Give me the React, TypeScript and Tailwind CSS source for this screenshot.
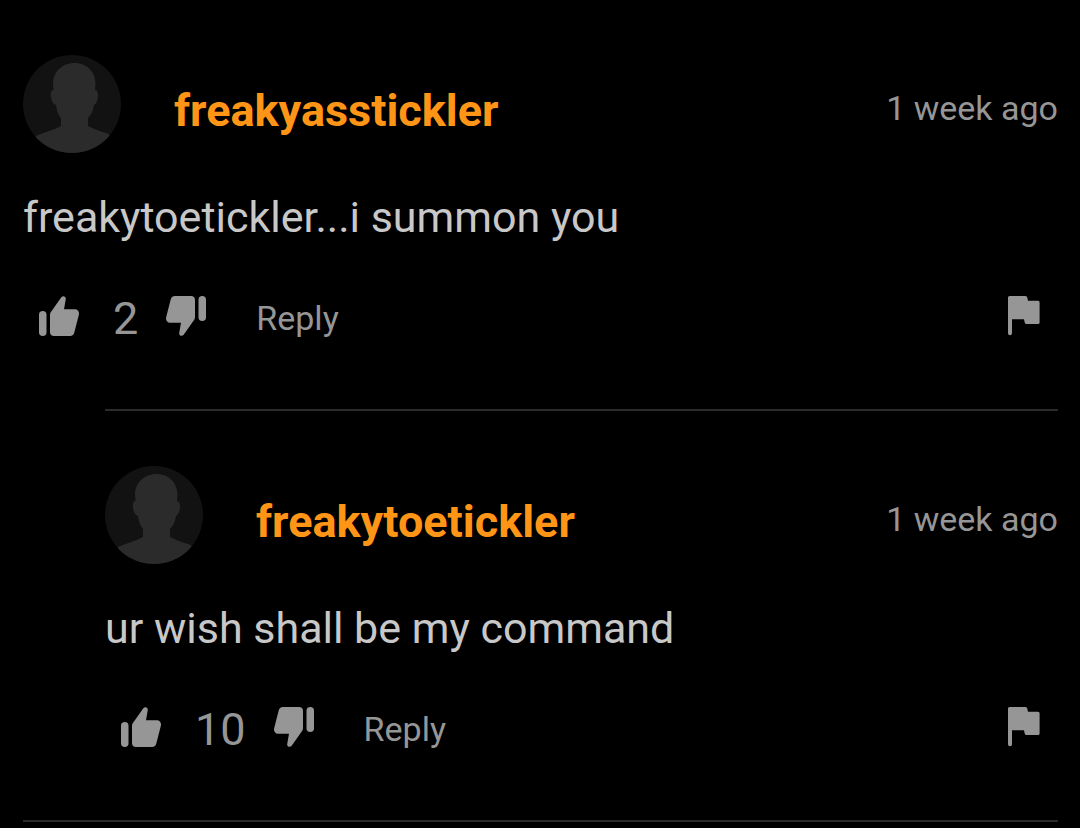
import React from 'react';
import clsx from 'clsx';

interface Comment {
  id: number;
  author: string;
  postedAt: string;
  text: string;
  votes: number;
  isReply: boolean;
}

const comments: Comment[] = [
  {
    id: 1,
    author: 'freakyasstickler',
    postedAt: '1 week ago',
    text: 'freakytoetickler...i summon you',
    votes: 2,
    isReply: false,
  },
  {
    id: 2,
    author: 'freakytoetickler',
    postedAt: '1 week ago',
    text: 'ur wish shall be my command',
    votes: 10,
    isReply: true,
  },
];

const Avatar: React.FC = () => (
  <svg viewBox="0 0 98 98" className="size-[98px] shrink-0 rounded-full" aria-hidden="true">
    <rect width="98" height="98" fill="#121212" />
    <path
      d="M51.5 8C39 8 30 17 30 29L30.5 35C28 35 27.500 38 28 42C28.500 46 30 49 33 50C34 56 35 60 38 63V71C31 75 22 77 13 81L8 98H92L86 79C79 77 71 74 65 71V63C68 60 70 56 71 50C73 49 74.500 46 75 42C75.500 38 74 35 72 35L72.500 29C72.500 17 64 8 51.500 8Z"
      fill="#2b2b2b"
    />
  </svg>
);

const ThumbIcon: React.FC<{ className?: string }> = ({ className }) => (
  <svg viewBox="0 0 40 40" className={clsx('size-10', className)} fill="currentColor" aria-hidden="true">
    <rect y="15" width="7.500" height="25" rx="3.750" />
    <path d="M11 19.500C11 17.500 11.500 16 13 14.500L22.300 1.200C24 -.8 27.200 .3 26.800 3L25 13.300H36C39 13.300 40.600 16 39.800 19L35.300 36.500C34.700 38.800 33.500 40 31 40H15C12.500 40 11 38.500 11 36Z" />
  </svg>
);

const FlagIcon: React.FC = () => (
  <svg viewBox="0 0 32 40" className="h-10 w-8" fill="currentColor" aria-hidden="true">
    <path d="M1.500 0H17.500Q19 0 19.300 1.500L20 4.700H30Q31.600 4.700 31.600 6.300V26.500Q31.600 28 30 28H18.500Q17 28 16.700 26.500L16 23.300H4V37.200Q4 39.200 2 39.200T0 37.200V1.500Q0 0 1.500 0Z" />
  </svg>
);

const CommentItem: React.FC<{ comment: Comment }> = ({ comment }) => (
  <article className={clsx('pt-[55px] pb-[73px]', comment.isReply && 'ml-[82px]')}>
    <header className="flex items-center">
      <Avatar />
      <a href="#profile" className="ml-[53px] pt-[14px] text-[45px] leading-[52px] font-bold text-[#ff9516]">
        {comment.author}
      </a>
      <time className="ml-auto pt-2 text-[34px] leading-10 text-[#969696]">{comment.postedAt}</time>
    </header>
    <p className="mt-[38px] text-[43px] leading-[52px] text-[#c8c8c8]">{comment.text}</p>
    <div className="mt-[53px] flex h-10 items-center pr-[18px] pl-4 text-[#969696]">
      <button type="button" aria-label="Like">
        <ThumbIcon />
      </button>
      <span className="ml-[34px] pt-[6px] text-[45px] leading-10">{comment.votes}</span>
      <button type="button" aria-label="Dislike" className="ml-7">
        <ThumbIcon className="rotate-180" />
      </button>
      <button type="button" className="ml-[50px] pt-1 text-[34px] leading-10">
        Reply
      </button>
      <button type="button" aria-label="Report" className="ml-auto">
        <FlagIcon />
      </button>
    </div>
  </article>
);

const App: React.FC = () => {
  return (
    <main className="min-h-screen bg-black pr-[22px] pl-[23px] font-[Roboto,'Liberation_Sans',sans-serif]">
      {comments.map((comment, index) => (
        <React.Fragment key={comment.id}>
          {index > 0 && <hr className="ml-[82px] border-t-2 border-[#2b2b2b]" />}
          <CommentItem comment={comment} />
        </React.Fragment>
      ))}
      <hr className="border-t-2 border-[#2b2b2b]" />
    </main>
  );
};

export default App;
